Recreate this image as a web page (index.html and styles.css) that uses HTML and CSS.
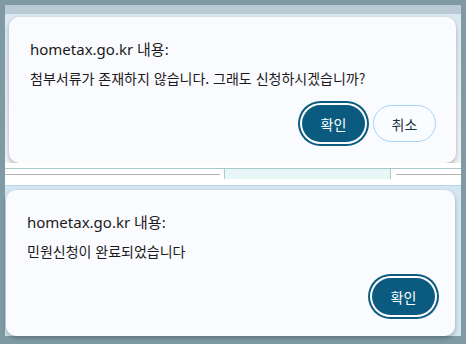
FILE: index.html
```html
<!DOCTYPE html>
<html lang="ko">
<head>
<meta charset="utf-8">
<link rel="stylesheet" href="styles.css">
</head>
<body>
<div class="frame">
  <div class="shot shot1">
    <div class="topband"></div>
    <div class="stage1">
      <div class="dialog d1">
        <div class="title">hometax.go.kr 내용:</div>
        <div class="msg">첨부서류가 존재하지 않습니다. 그래도 신청하시겠습니까?</div>
        <div class="actions">
          <button class="btn primary">확인</button>
          <button class="btn secondary">취소</button>
        </div>
      </div>
    </div>
    <div class="strip">
      <div class="line teal"></div>
      <div class="cells">
        <div class="cell left"></div>
        <div class="cell mid"></div>
        <div class="cell right"></div>
      </div>
    </div>
  </div>
  <div class="shot shot2">
    <div class="dialog d2">
      <div class="title">hometax.go.kr 내용:</div>
      <div class="msg">민원신청이 완료되었습니다</div>
      <div class="actions">
        <button class="btn primary">확인</button>
      </div>
    </div>
  </div>
</div>
</body>
</html>
```
FILE: styles.css
```css
html, body {
  margin: 0;
  padding: 0;
}
body {
  width: 466px;
  height: 344px;
  background: #7f9aa2;
  overflow: hidden;
  font-family: "Noto Sans", "Noto Sans CJK KR", sans-serif;
}
.frame {
  margin-left: 5px;
  width: 456px;
  padding-top: 5px;
}
.shot1 {
  background: #e9eff4;
}
.topband {
  height: 9px;
  background: #b9cad5;
}
.stage1 {
  padding: 3px 0 0 4px;
  background: linear-gradient(#dce8f1, #eef2f6);
}
.dialog {
  box-sizing: border-box;
  height: 146px;
  background: #fafbfe;
  border-radius: 10px;
  box-shadow: 0 2px 4px rgba(0, 0, 0, 0.28);
  padding: 22px 20px 21px 21px;
  display: flex;
  flex-direction: column;
  color: #1a1a1a;
}
.d1 {
  width: 447px;
}
.d2 {
  width: 449px;
  margin-left: 1px;
}
.title {
  font-size: 15px;
  line-height: 20px;
  height: 20px;
  white-space: nowrap;
}
.msg {
  margin-top: 10px;
  font-family: "Noto Sans CJK KR", sans-serif;
  font-size: 14px;
  line-height: 18px;
  height: 18px;
  white-space: nowrap;
}
.actions {
  margin-top: auto;
  display: flex;
  justify-content: flex-end;
  gap: 8px;
}
.btn {
  box-sizing: border-box;
  width: 63px;
  height: 37px;
  border-radius: 19px;
  font-family: "Noto Sans CJK KR", sans-serif;
  font-size: 14px;
  padding: 0;
  cursor: pointer;
}
.primary {
  background: #0a5b7f;
  color: #ffffff;
  border: none;
  box-shadow: 0 0 0 2px #ffffff, 0 0 0 4px #0a5b7f;
}
.secondary {
  background: #fafdff;
  color: #1d3440;
  border: 1px solid #a6d4f6;
}
.strip {
  height: 22px;
  background: #ffffff;
  display: flex;
  flex-direction: column;
}
.line.teal {
  margin-top: 5px;
  height: 1px;
  background: #a8c9cb;
}
.cells {
  display: flex;
  flex: 1;
}
.cell {
  height: 100%;
}
.cell.left {
  width: 215px;
  background: linear-gradient(#ffffff 5px, #b5b5b5 5px, #b5b5b5 6px, #ffffff 6px);
}
.cell.mid {
  width: 165px;
  margin-left: 4px;
  background: #e9f6f6;
  border-left: 1px solid #a8cfd1;
  border-right: 1px solid #a8cfd1;
  height: 10px;
}
.cell.right {
  flex: 1;
  margin-left: 5px;
  background: linear-gradient(#ffffff 5px, #b5b5b5 5px, #b5b5b5 6px, #ffffff 6px);
}
.shot2 {
  background: #d4e6f2;
  padding-top: 4px;
  border-top: 1px solid #b9d3e3;
  height: 146px;
}
```
